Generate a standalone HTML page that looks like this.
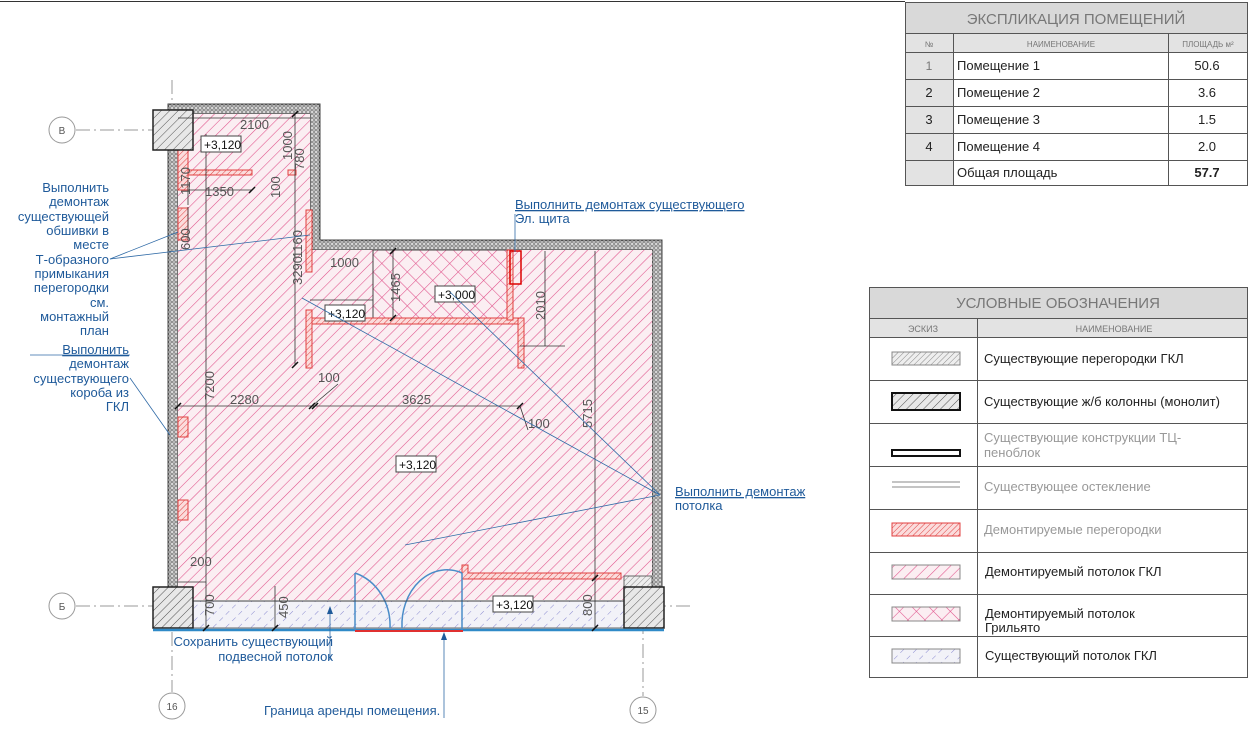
<!DOCTYPE html>
<html><head><meta charset="utf-8"><style>
html,body{margin:0;padding:0;background:#fff;}
svg{display:block;font-family:"Liberation Sans","DejaVu Sans",sans-serif;}
</style></head><body>
<svg width="1248" height="737" viewBox="0 0 1248 737" xmlns="http://www.w3.org/2000/svg">
<defs>
<pattern id="pk" width="8" height="8" patternUnits="userSpaceOnUse" patternTransform="rotate(45)">
<rect width="8" height="8" fill="#fbeef2"/><line x1="0" y1="0" x2="0" y2="8" stroke="#e0508a" stroke-width="1.1"/></pattern>
<pattern id="gx" width="12" height="12" patternUnits="userSpaceOnUse" patternTransform="rotate(45)">
<rect width="12" height="12" fill="#fbeef2"/><line x1="0" y1="0" x2="0" y2="12" stroke="#e0508a" stroke-width="1.1"/><line x1="0" y1="0" x2="12" y2="0" stroke="#e0508a" stroke-width="1.1"/></pattern>
<pattern id="bl" width="9" height="9" patternUnits="userSpaceOnUse" patternTransform="rotate(45)">
<rect width="9" height="9" fill="#f2f2f8"/><line x1="0" y1="0" x2="0" y2="5" stroke="#8a8ad0" stroke-width="1"/></pattern>
<pattern id="gr" width="4" height="4" patternUnits="userSpaceOnUse" patternTransform="rotate(45)">
<rect width="4" height="4" fill="#eee"/><line x1="0" y1="0" x2="0" y2="4" stroke="#888" stroke-width="1"/></pattern>
<pattern id="col" width="6" height="6" patternUnits="userSpaceOnUse" patternTransform="rotate(45)">
<rect width="6" height="6" fill="#e8e8e8"/><line x1="0" y1="0" x2="0" y2="6" stroke="#555" stroke-width="1"/></pattern>
<pattern id="rd" width="4" height="4" patternUnits="userSpaceOnUse" patternTransform="rotate(45)">
<rect width="4" height="4" fill="#fbdcdc"/><line x1="0" y1="0" x2="0" y2="4" stroke="#e04040" stroke-width="1"/></pattern>
<pattern id="wl" width="4" height="4" patternUnits="userSpaceOnUse">
<rect width="4" height="4" fill="#ddd"/><circle cx="2" cy="2" r="1.3" fill="none" stroke="#555" stroke-width="0.7"/></pattern>
</defs>

<line x1="0" y1="1.5" x2="905" y2="1.5" stroke="#333" stroke-width="1"/>

<g stroke="#999" stroke-width="1" stroke-dasharray="14 4 2 4" fill="none">
<line x1="76" y1="130" x2="170" y2="130"/>
<line x1="76" y1="606" x2="690" y2="606"/>
<line x1="172" y1="80" x2="172" y2="692"/>
<line x1="643" y1="620" x2="643" y2="696"/>
</g>
<g fill="#fff" stroke="#999"><circle cx="62" cy="130" r="13"/><circle cx="62" cy="606" r="13"/><circle cx="172" cy="706" r="13"/><circle cx="643" cy="710" r="13"/></g>
<g font-size="10" fill="#555" text-anchor="middle"><text x="62" y="134">В</text><text x="62" y="610">Б</text><text x="172" y="710">16</text><text x="643" y="714">15</text></g>

<path d="M168 104 H320 V240 H662 V590 H652 V250 H310 V114 H178 V590 H168 Z" fill="url(#wl)" stroke="#444" stroke-width="1"/>
<path d="M178 114 H310 V250 H652 V600 H178 Z" fill="url(#pk)"/>
<rect x="373" y="250" width="134" height="68" fill="url(#gx)" stroke="#444" stroke-width="1"/>
<rect x="193" y="601" width="431" height="27" fill="url(#bl)" stroke="#666" stroke-width="1"/>
<rect x="624" y="576" width="28" height="12" fill="url(#gr)" stroke="#666"/>

<g fill="url(#rd)" stroke="#e04040" stroke-width="1">
<rect x="306" y="318" width="214" height="6"/>
<rect x="507" y="250" width="6" height="70"/>
<rect x="518" y="318" width="6" height="50"/>
<rect x="306" y="310" width="6" height="58"/>
<rect x="306" y="210" width="6" height="62"/>
<rect x="178" y="170" width="74" height="5"/>
<rect x="178" y="150" width="10" height="40"/>
<rect x="178" y="208" width="10" height="32"/>
<rect x="178" y="417" width="10" height="20"/>
<rect x="178" y="500" width="10" height="20"/>
<rect x="288" y="170" width="8" height="5"/>
<path d="M462 565 H468 V573 H621 V579 H462 Z"/>
</g>
<rect x="510" y="251" width="11" height="33" fill="none" stroke="#d00" stroke-width="1.5"/>

<g fill="url(#col)" stroke="#222" stroke-width="1.5">
<rect x="153" y="110" width="40" height="40"/>
<rect x="153" y="587" width="40" height="41"/>
<rect x="624" y="587" width="40" height="41"/>
</g>

<line x1="153" y1="630" x2="664" y2="630" stroke="#2f8ac8" stroke-width="2.5"/>
<line x1="355" y1="631" x2="463" y2="631" stroke="#e03030" stroke-width="2"/>
<g stroke="#4a8cc8" stroke-width="1.5" fill="none">
<line x1="355" y1="573" x2="355" y2="630"/><line x1="462" y1="573" x2="462" y2="630"/>
<path d="M355 573 A50 55 0 0 1 390 628"/><path d="M462 573 A45 55 0 0 0 402 628"/>
</g>

<g stroke="#333" stroke-width="0.8" fill="none">
<line x1="178" y1="118" x2="310" y2="118"/>
<line x1="295" y1="114" x2="295" y2="365"/>
<line x1="188" y1="190" x2="252" y2="190"/>
<line x1="188" y1="180" x2="188" y2="205"/>
<line x1="188" y1="207" x2="188" y2="240"/>
<line x1="310" y1="300" x2="373" y2="300"/>
<line x1="393" y1="251" x2="393" y2="318"/>
<line x1="545" y1="251" x2="545" y2="346"/>
<line x1="520" y1="346" x2="565" y2="346"/>
<line x1="178" y1="406" x2="520" y2="406"/>
<line x1="595" y1="251" x2="595" y2="628"/>
<line x1="206" y1="134" x2="206" y2="628"/>
<line x1="193" y1="601" x2="624" y2="601"/>
<line x1="275" y1="586" x2="275" y2="628"/>
<line x1="178" y1="582" x2="206" y2="582"/>
<line x1="312" y1="406" x2="338" y2="384"/>
<line x1="520" y1="406" x2="528" y2="430"/>
</g>
<g stroke="#111" stroke-width="1.5">
<line x1="175" y1="409" x2="181" y2="403"/><line x1="309" y1="409" x2="315" y2="403"/><line x1="312" y1="409" x2="318" y2="403"/><line x1="517" y1="409" x2="523" y2="403"/>
<line x1="292" y1="117" x2="298" y2="111"/><line x1="292" y1="368" x2="298" y2="362"/><line x1="249" y1="193" x2="255" y2="187"/>
<line x1="203" y1="631" x2="209" y2="625"/><line x1="272" y1="631" x2="278" y2="625"/><line x1="592" y1="631" x2="598" y2="625"/>
<line x1="592" y1="581" x2="598" y2="575"/><line x1="390" y1="254" x2="396" y2="248"/><line x1="390" y1="321" x2="396" y2="315"/>
</g>
<g font-size="13" fill="#555">
<text x="240" y="129">2100</text>
<text x="205" y="196">1350</text>
<text x="330" y="267">1000</text>
<text x="230" y="404">2280</text>
<text x="402" y="404">3625</text>
<text x="318" y="382">100</text>
<text x="528" y="428">100</text>
<text x="190" y="566">200</text>
<g transform="rotate(-90)">
<text x="-160" y="292">1000</text><text x="-170" y="304">780</text><text x="-198" y="280">100</text>
<text x="-195" y="190">1170</text><text x="-250" y="190">600</text>
<text x="-285" y="302">3290</text><text x="-258" y="302">1160</text>
<text x="-302" y="400">1465</text><text x="-320" y="545">2010</text>
<text x="-400" y="214">7200</text><text x="-428" y="592">5715</text>
<text x="-616" y="214">700</text><text x="-618" y="288">450</text><text x="-616" y="592">800</text>
</g>
</g>
<g font-size="12" fill="#111">
<rect x="201" y="136" width="40" height="16" fill="#fff" stroke="#444"/><text x="204" y="149">+3,120</text>
<rect x="325" y="305" width="40" height="16" fill="#fff" stroke="#444"/><text x="328" y="318">+3,120</text>
<rect x="435" y="286" width="40" height="16" fill="#fff" stroke="#444"/><text x="438" y="299">+3,000</text>
<rect x="396" y="456" width="40" height="16" fill="#fff" stroke="#444"/><text x="399" y="469">+3,120</text>
<rect x="493" y="596" width="40" height="16" fill="#fff" stroke="#444"/><text x="496" y="609">+3,120</text>
</g>

<g stroke="#2f6aa6" stroke-width="0.8" fill="none">
<line x1="110" y1="259" x2="178" y2="232"/><line x1="110" y1="259" x2="310" y2="235"/>
<line x1="30" y1="355" x2="130" y2="355"/><line x1="130" y1="378" x2="170" y2="435"/>
<line x1="515" y1="214" x2="515" y2="252"/>
<line x1="660" y1="495" x2="450" y2="292"/><line x1="660" y1="495" x2="302" y2="298"/><line x1="660" y1="495" x2="405" y2="545"/>
<line x1="330" y1="660" x2="330" y2="610"/><line x1="444" y1="718" x2="444" y2="634"/>
</g>
<g fill="#1f5a9a"><path d="M330 606 l-3 8 h6z"/><path d="M444 632 l-3 8 h6z"/></g>
<g font-size="13" fill="#1f5a9a">
<g text-anchor="end">
<text x="109" y="192">Выполнить</text><text x="109" y="206">демонтаж</text><text x="109" y="221">существующей</text><text x="109" y="235">обшивки в</text><text x="109" y="249">месте</text><text x="109" y="264">Т-образного</text><text x="109" y="278">примыкания</text><text x="109" y="292">перегородки</text><text x="109" y="307">см.</text><text x="109" y="321">монтажный</text><text x="109" y="335">план</text>
<text x="129" y="354" text-decoration="underline">Выполнить</text><text x="129" y="368">демонтаж</text><text x="129" y="383">существующего</text><text x="129" y="397">короба из</text><text x="129" y="411">ГКЛ</text>
<text x="333" y="646">Сохранить существующий</text><text x="333" y="661">подвесной потолок</text>
</g>
<text x="515" y="209" text-decoration="underline">Выполнить демонтаж существующего</text><text x="515" y="223">Эл. щита</text>
<text x="675" y="496" text-decoration="underline">Выполнить демонтаж</text><text x="675" y="510">потолка</text>
<text x="264" y="715">Граница аренды помещения.</text>
</g>

<g stroke="#555" stroke-width="1">
<rect x="905.5" y="2.5" width="342" height="183" fill="#fff"/>
<rect x="905.5" y="2.5" width="342" height="31" fill="#d9d9d9"/>
<rect x="905.5" y="33.5" width="342" height="19" fill="#e3e3e3"/>
<rect x="905.5" y="52.5" width="48" height="133" fill="#e3e3e3"/>
<line x1="953.5" y1="33" x2="953.5" y2="186"/><line x1="1168.5" y1="33" x2="1168.5" y2="186"/>
<line x1="905" y1="79.5" x2="1248" y2="79.5"/><line x1="905" y1="106.5" x2="1248" y2="106.5"/><line x1="905" y1="133.5" x2="1248" y2="133.5"/><line x1="905" y1="160.5" x2="1248" y2="160.5"/>
</g>
<g fill="#777" text-anchor="middle">
<text x="1076" y="24" font-size="15">ЭКСПЛИКАЦИЯ ПОМЕЩЕНИЙ</text>
<text x="929" y="47" font-size="8">№</text><text x="1061" y="47" font-size="8">НАИМЕНОВАНИЕ</text><text x="1208" y="47" font-size="8">ПЛОЩАДЬ м²</text>
<text x="929" y="70" font-size="12">1</text>
</g>
<g fill="#222" font-size="13">
<text x="929" y="97" text-anchor="middle">2</text><text x="929" y="124" text-anchor="middle">3</text><text x="929" y="151" text-anchor="middle">4</text>
<text x="957" y="70">Помещение 1</text><text x="957" y="97">Помещение 2</text><text x="957" y="124">Помещение 3</text><text x="957" y="151">Помещение 4</text><text x="957" y="177">Общая площадь</text>
<g text-anchor="middle"><text x="1207" y="70">50.6</text><text x="1207" y="97">3.6</text><text x="1207" y="124">1.5</text><text x="1207" y="151">2.0</text><text x="1207" y="177" font-weight="bold">57.7</text></g>
</g>

<g stroke="#555" stroke-width="1">
<rect x="869.5" y="287.5" width="378" height="390" fill="#fff"/>
<rect x="869.5" y="287.5" width="378" height="31" fill="#d9d9d9"/>
<rect x="869.5" y="318.5" width="378" height="19" fill="#e3e3e3"/>
<line x1="977.5" y1="318" x2="977.5" y2="678"/>
<line x1="869" y1="380.5" x2="1248" y2="380.5"/><line x1="869" y1="423.5" x2="1248" y2="423.5"/><line x1="869" y1="466.5" x2="1248" y2="466.5"/><line x1="869" y1="509.5" x2="1248" y2="509.5"/><line x1="869" y1="552.5" x2="1248" y2="552.5"/><line x1="869" y1="594.5" x2="1248" y2="594.5"/><line x1="869" y1="636.5" x2="1248" y2="636.5"/>
</g>
<g fill="#777" text-anchor="middle">
<text x="1058" y="308" font-size="15">УСЛОВНЫЕ ОБОЗНАЧЕНИЯ</text>
<text x="923" y="332" font-size="9">ЭСКИЗ</text><text x="1114" y="332" font-size="9">НАИМЕНОВАНИЕ</text>
</g>
<rect x="892" y="352" width="68" height="13" fill="url(#gr)" stroke="#888"/>
<rect x="892" y="393" width="68" height="17" fill="url(#col)" stroke="#111" stroke-width="2"/>
<rect x="892" y="450" width="68" height="6" fill="#fff" stroke="#111" stroke-width="2"/>
<line x1="892" y1="482" x2="960" y2="482" stroke="#888"/><line x1="892" y1="487" x2="960" y2="487" stroke="#888"/>
<rect x="892" y="523" width="68" height="13" fill="url(#rd)" stroke="#e04040"/>
<rect x="892" y="565" width="68" height="14" fill="url(#pk)" stroke="#888"/>
<rect x="892" y="607" width="68" height="14" fill="url(#gx)" stroke="#888"/>
<rect x="892" y="649" width="68" height="14" fill="url(#bl)" stroke="#888"/>
<g font-size="13">
<text x="984" y="363" fill="#222">Существующие перегородки ГКЛ</text>
<text x="984" y="406" fill="#222">Существующие ж/б колонны (монолит)</text>
<text x="984" y="442" fill="#999">Существующие конструкции  ТЦ-</text><text x="984" y="457" fill="#999">пеноблок</text>
<text x="984" y="491" fill="#999">Существующее остекление</text>
<text x="984" y="534" fill="#999">Демонтируемые перегородки</text>
<text x="985" y="576" fill="#222">Демонтируемый потолок ГКЛ</text>
<text x="985" y="618" fill="#222">Демонтируемый потолок</text><text x="985" y="632" fill="#222">Грильято</text>
<text x="985" y="660" fill="#222">Существующий потолок ГКЛ</text>
</g>
</svg>
</body></html>
